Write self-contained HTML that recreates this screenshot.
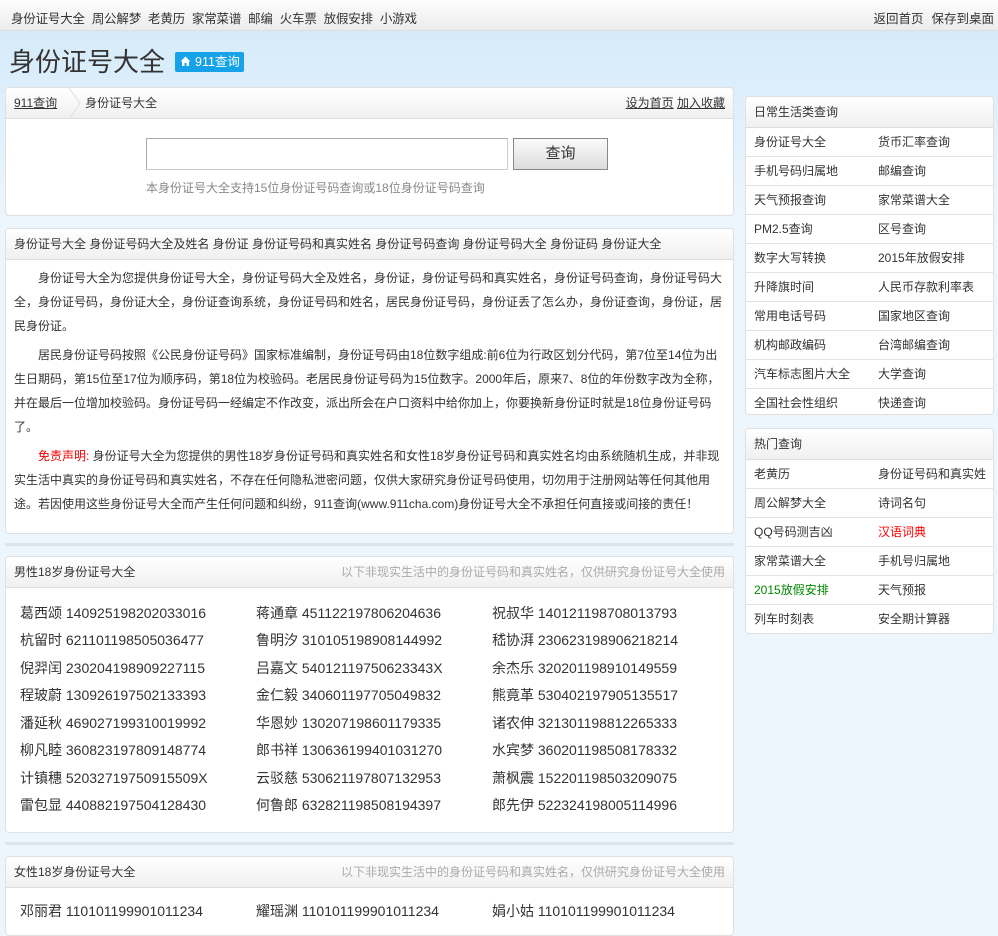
<!DOCTYPE html>
<html><head><meta charset="utf-8"><style>
*{margin:0;padding:0;box-sizing:border-box}
body{width:998px;height:907px;overflow:hidden;font-family:"Liberation Sans","Noto Sans CJK SC",sans-serif;font-size:12px;color:#333;background:#eef6fd;position:relative}
a{color:#333;text-decoration:none}
.top{height:31px;background:linear-gradient(#fdfdfd,#ececec);border-bottom:1px solid #ddd;position:relative}
.top .l{position:absolute;left:11px;top:8px;font-size:12.5px;letter-spacing:-0.2px}
.top .l span{margin-right:7px}
.top .r{position:absolute;right:4px;top:8px;font-size:12.5px}
.top .r span{margin-left:8px}
.hd{position:absolute;top:31px;left:0;width:998px;height:200px;background:linear-gradient(#d6ebfa,#eef6fd)}
.title{position:absolute;left:9px;top:42px;font-size:26px;color:#333}
.badge{position:absolute;left:175px;top:52px;width:69px;height:20px;background:#16a2e8;color:#fff;font-size:12.5px;line-height:20px;padding-left:20px;border-radius:2px}
.badge svg{position:absolute;left:5px;top:4px}
.box{position:absolute;background:#fff;border:1px solid #e0e0e0;border-radius:4px;overflow:hidden}
.bh{height:31px;background:linear-gradient(#fff,#f0f0f0);border-bottom:1px solid #ddd;line-height:31px;padding-left:8px;font-size:12px;position:relative}
.bh .g{position:absolute;right:8px;top:0;color:#aaa}
.p{padding:0 8px;line-height:24px;font-size:12px;margin-top:6px}
.p p{text-indent:2em;margin-bottom:5px}
.sep{position:absolute;left:5px;width:729px;height:3px;background:#dde5ea}
.list{position:absolute;font-size:14px;color:#333}
.list div{position:absolute;white-space:nowrap}
.rt .row{height:29px;border-bottom:1px solid #e3e3e3;line-height:28px;position:relative;font-size:12px}
.rt .row:last-child{border-bottom:none}
.rt .row span{position:absolute;left:8px}
.rt .row span+span{left:132px}
</style></head><body>
<div class="hd"></div>
<div class="top"><div class="l"><span>身份证号大全</span><span>周公解梦</span><span>老黄历</span><span>家常菜谱</span><span>邮编</span><span>火车票</span><span>放假安排</span>小游戏</div>
<div class="r"><span>返回首页</span><span>保存到桌面</span></div></div>
<div class="title">身份证号大全</div>
<div class="badge"><svg width="11" height="11" viewBox="0 0 11 11"><path d="M5.5 0.5L0.5 5.5H2V10H4.5V7H6.5V10H9V5.5H10.5Z" fill="#fff"/></svg>911查询</div>

<div class="box" style="left:5px;top:87px;width:729px;height:129px">
<div class="bh" style="padding-left:8px"><a style="text-decoration:underline">911查询</a><svg style="position:absolute;left:62px;top:0" width="14" height="31"><path d="M1 0L12 15.5L1 31" stroke="#ddd" fill="none"/></svg><span style="margin-left:28px">身份证号大全</span><span style="position:absolute;right:8px;top:0"><u>设为首页</u> <u>加入收藏</u></span></div>
<div style="position:absolute;left:140px;top:50px;width:362px;height:32px;border:1px solid #aaa;border-bottom-color:#ccc;border-right-color:#ccc"></div>
<div style="position:absolute;left:507px;top:50px;width:95px;height:32px;border:1px solid #888;background:linear-gradient(#fafafa,#ddd);text-align:center;line-height:30px;font-size:15px">查询</div>
<div style="position:absolute;left:140px;top:91px;color:#888;font-size:12px">本身份证号大全支持15位身份证号码查询或18位身份证号码查询</div>
</div>

<div class="box" style="left:5px;top:228px;width:729px;height:306px">
<div class="bh">身份证号大全 身份证号码大全及姓名 身份证 身份证号码和真实姓名 身份证号码查询 身份证号码大全 身份证码 身份证大全</div>
<div class="p">
<p>身份证号大全为您提供身份证号大全，身份证号码大全及姓名，身份证，身份证号码和真实姓名，身份证号码查询，身份证号码大全，身份证号码，身份证大全，身份证查询系统，身份证号码和姓名，居民身份证号码，身份证丢了怎么办，身份证查询，身份证，居民身份证。</p>
<p>居民身份证号码按照《公民身份证号码》国家标准编制，身份证号码由18位数字组成:前6位为行政区划分代码，第7位至14位为出生日期码，第15位至17位为顺序码，第18位为校验码。老居民身份证号码为15位数字。2000年后，原来7、8位的年份数字改为全称，并在最后一位增加校验码。身份证号码一经编定不作改变，派出所会在户口资料中给你加上，你要换新身份证时就是18位身份证号码了。</p>
<p><b style="color:#e00;font-weight:normal">免责声明:</b> 身份证号大全为您提供的男性18岁身份证号码和真实姓名和女性18岁身份证号码和真实姓名均由系统随机生成，并非现实生活中真实的身份证号码和真实姓名，不存在任何隐私泄密问题，仅供大家研究身份证号码使用，切勿用于注册网站等任何其他用途。若因使用这些身份证号大全而产生任何问题和纠纷，911查询(www.911cha.com)身份证号大全不承担任何直接或间接的责任！</p>
</div></div>
<div class="sep" style="top:543px"></div>

<div class="box" style="left:5px;top:556px;width:729px;height:277px">
<div class="bh">男性18岁身份证号大全<span class="g">以下非现实生活中的身份证号码和真实姓名，仅供研究身份证号大全使用</span></div>
</div>
<div class="list" style="left:20px;top:603px">
<div style="left:0;top:0">葛西颂 140925198202033016</div><div style="left:236px;top:0">蒋通章 451122197806204636</div><div style="left:472px;top:0">祝叔华 140121198708013793</div>
<div style="left:0;top:27px">杭留时 621101198505036477</div><div style="left:236px;top:27px">鲁明汐 310105198908144992</div><div style="left:472px;top:27px">嵇协湃 230623198906218214</div>
<div style="left:0;top:55px">倪羿闰 230204198909227115</div><div style="left:236px;top:55px">吕嘉文 54012119750623343X</div><div style="left:472px;top:55px">余杰乐 320201198910149559</div>
<div style="left:0;top:82px">程玻蔚 130926197502133393</div><div style="left:236px;top:82px">金仁毅 340601197705049832</div><div style="left:472px;top:82px">熊竟革 530402197905135517</div>
<div style="left:0;top:110px">潘延秋 469027199310019992</div><div style="left:236px;top:110px">华恩妙 130207198601179335</div><div style="left:472px;top:110px">诸农伸 321301198812265333</div>
<div style="left:0;top:137px">柳凡睦 360823197809148774</div><div style="left:236px;top:137px">郎书祥 130636199401031270</div><div style="left:472px;top:137px">水宾梦 360201198508178332</div>
<div style="left:0;top:165px">计镇穗 52032719750915509X</div><div style="left:236px;top:165px">云驳慈 530621197807132953</div><div style="left:472px;top:165px">萧枫震 152201198503209075</div>
<div style="left:0;top:192px">雷包显 440882197504128430</div><div style="left:236px;top:192px">何鲁郎 632821198508194397</div><div style="left:472px;top:192px">郎先伊 522324198005114996</div>
</div>
<div class="sep" style="top:842px"></div>
<div class="box" style="left:5px;top:856px;width:729px;height:80px">
<div class="bh">女性18岁身份证号大全<span class="g">以下非现实生活中的身份证号码和真实姓名，仅供研究身份证号大全使用</span></div>
</div>
<div class="list" style="left:20px;top:901px">
<div style="left:0;top:0">邓丽君 110101199901011234</div><div style="left:236px;top:0">耀瑶渊 110101199901011234</div><div style="left:472px;top:0">娟小姑 110101199901011234</div>
</div>

<div class="box rt" style="left:745px;top:96px;width:249px;height:319px">
<div class="bh">日常生活类查询</div>
<div class="row"><span>身份证号大全</span><span>货币汇率查询</span></div>
<div class="row"><span>手机号码归属地</span><span>邮编查询</span></div>
<div class="row"><span>天气预报查询</span><span>家常菜谱大全</span></div>
<div class="row"><span>PM2.5查询</span><span>区号查询</span></div>
<div class="row"><span>数字大写转换</span><span>2015年放假安排</span></div>
<div class="row"><span>升降旗时间</span><span>人民币存款利率表</span></div>
<div class="row"><span>常用电话号码</span><span>国家地区查询</span></div>
<div class="row"><span>机构邮政编码</span><span>台湾邮编查询</span></div>
<div class="row"><span>汽车标志图片大全</span><span>大学查询</span></div>
<div class="row"><span>全国社会性组织</span><span>快递查询</span></div>
</div>
<div class="box rt" style="left:745px;top:428px;width:249px;height:206px">
<div class="bh">热门查询</div>
<div class="row"><span>老黄历</span><span>身份证号码和真实姓</span></div>
<div class="row"><span>周公解梦大全</span><span>诗词名句</span></div>
<div class="row"><span>QQ号码测吉凶</span><span style="color:#f00">汉语词典</span></div>
<div class="row"><span>家常菜谱大全</span><span>手机号归属地</span></div>
<div class="row"><span style="color:#080">2015放假安排</span><span>天气预报</span></div>
<div class="row"><span>列车时刻表</span><span>安全期计算器</span></div>
</div>
</body></html>
